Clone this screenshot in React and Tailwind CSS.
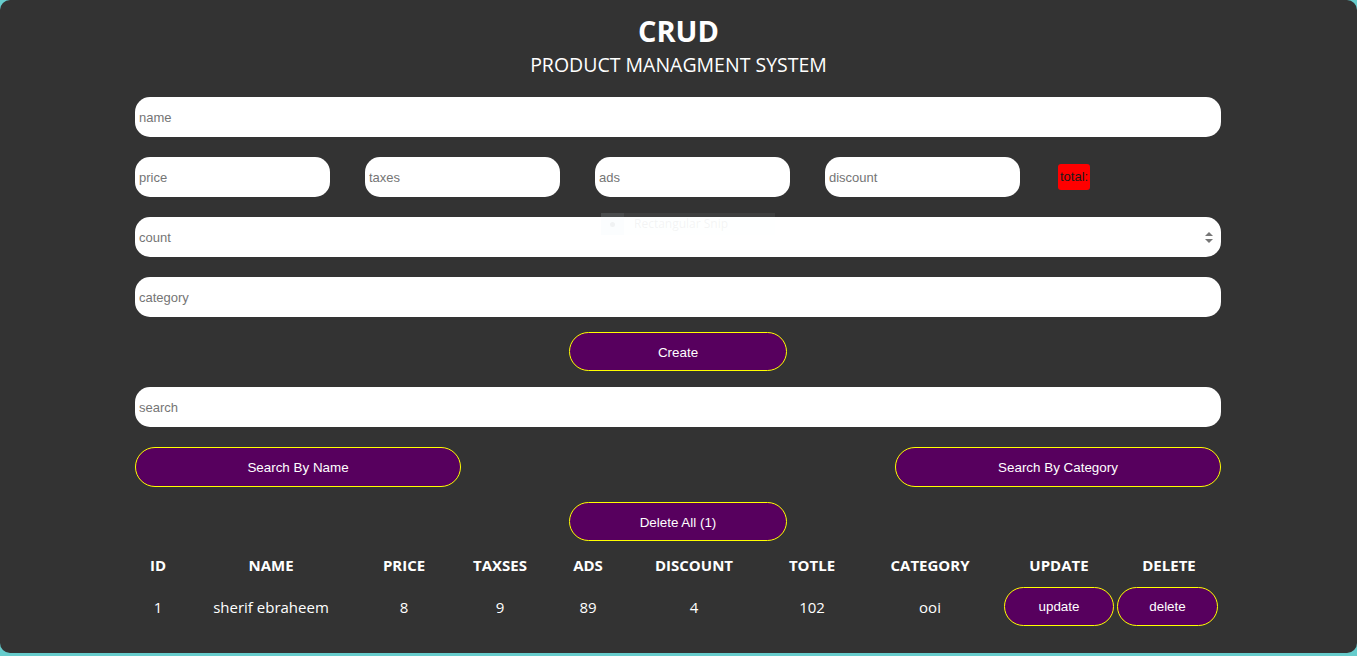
const headings = ['ID', 'NAME', 'PRICE', 'TAXSES', 'ADS', 'DISCOUNT', 'TOTLE', 'CATEGORY', 'UPDATE', 'DELETE'];

const products = [
  { id: 1, name: 'sherif ebraheem', price: 8, taxes: 9, ads: 89, discount: 4, total: 102, category: 'ooi' },
];

const cols = 'grid grid-cols-[46px_180px_86px_106px_70px_142px_94px_142px_116px_1fr]';

const Field = ({ placeholder, className = '' }) => (
  <input
    type="text"
    placeholder={placeholder}
    className={`h-10 bg-white rounded-[15px] pl-1 text-[13px] text-black placeholder-[#757575] outline-none font-['Liberation_Sans',Arial,sans-serif] ${className}`}
  />
);

const Btn = ({ children, tall = false, className = '' }) => (
  <button
    className={`${tall ? 'h-10' : 'h-[39px]'} pt-[3px] rounded-[20px] border border-[#ffff00] bg-[#57005e] text-white text-[13.4px] font-['Liberation_Sans',Arial,sans-serif] ${className}`}
  >
    {children}
  </button>
);

export default function App() {
  return (
    <div className="min-h-screen bg-[#66cccc]">
      <div className="relative h-[653px] rounded-[10px] bg-[#333333] text-white font-['Open_Sans',sans-serif]">
        <div className="flex flex-col items-center pt-[11px]">
          <h1 className="text-[29px] font-bold leading-[40px]">CRUD</h1>
          <p className="text-[19.5px] leading-[27px]">PRODUCT MANAGMENT SYSTEM</p>
        </div>

        <div className="ml-[135px] w-[1086px] mt-[19px] flex flex-col">
          <Field placeholder="name" className="w-full" />

          <div className="flex items-center mt-5">
            <Field placeholder="price" className="w-[195px]" />
            <Field placeholder="taxes" className="w-[195px] ml-[35px]" />
            <Field placeholder="ads" className="w-[195px] ml-[35px]" />
            <Field placeholder="discount" className="w-[195px] ml-[35px]" />
            <span className="ml-[38px] h-[26px] px-[2px] flex items-center rounded-[3px] bg-[#ff0000] text-[13px] text-[#1a1a1a] font-['Liberation_Sans',Arial,sans-serif]">total:</span>
          </div>

          <div className="relative mt-5 h-10 bg-white rounded-[15px] flex items-center">
            <span className="pl-1 pt-[1px] text-[13px] text-[#757575] font-['Liberation_Sans',Arial,sans-serif]">count</span>
            <svg className="ml-auto mr-[8px]" width="8" height="11" viewBox="0 0 8 11">
              <path d="M4 0 L8 4 L0 4 Z" fill="#777" />
              <path d="M4 11 L8 7 L0 7 Z" fill="#777" />
            </svg>
          </div>

          <Field placeholder="category" className="w-full mt-5" />

          <Btn className="mx-auto mt-[15px] w-[218px]">Create</Btn>

          <Field placeholder="search" className="w-full mt-4" />

          <div className="flex justify-between mt-5">
            <Btn tall className="w-[326px]">Search By Name</Btn>
            <Btn tall className="w-[326px]">Search By Category</Btn>
          </div>

          <Btn className="mx-auto mt-[15px] w-[218px]">Delete All (1)</Btn>

          <div className={`${cols} h-[45px] pt-[3px] items-center text-center text-[15px] font-bold`}>
            {headings.map((h) => (
              <div key={h}>{h}</div>
            ))}
          </div>

          {products.map((p) => (
            <div key={p.id} className={`${cols} h-10 items-center text-center text-[15px]`}>
              <div className="pt-[3px]">{p.id}</div>
              <div className="pt-[3px]">{p.name}</div>
              <div className="pt-[3px]">{p.price}</div>
              <div className="pt-[3px]">{p.taxes}</div>
              <div className="pt-[3px]">{p.ads}</div>
              <div className="pt-[3px]">{p.discount}</div>
              <div className="pt-[3px]">{p.total}</div>
              <div className="pt-[3px]">{p.category}</div>
              <div className="flex justify-center">
                <Btn className="w-[110px]">update</Btn>
              </div>
              <div className="flex justify-start">
                <Btn className="w-[101px]">delete</Btn>
              </div>
            </div>
          ))}
        </div>

        <div className="absolute left-[601px] top-[213px] w-[174px] h-[22px] flex items-center bg-[#f0f8ff]/[0.06] pointer-events-none">
          <span className="w-[23px] h-full flex items-center justify-center bg-[#dbe7f3]/[0.08]">
            <span className="w-[5px] h-[5px] rounded-full bg-[#c8c8c8]/20" />
          </span>
          <span className="ml-[10px] text-[12px] text-[#c8c8c8]/20 font-['Open_Sans',sans-serif]">Rectangular Snip</span>
        </div>
      </div>
    </div>
  );
}
